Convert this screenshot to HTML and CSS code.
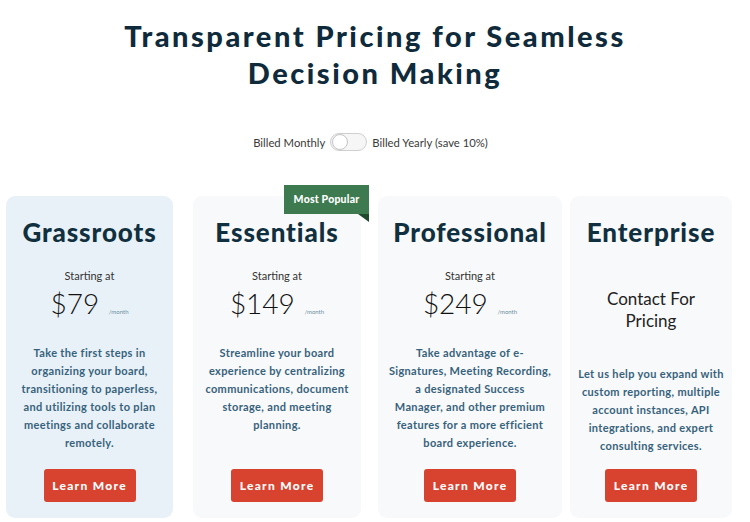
FILE: index.html
```html
<!DOCTYPE html>
<html lang="en">
<head>
<meta charset="utf-8">
<title>Pricing</title>
<link rel="stylesheet" href="styles.css">
</head>
<body>
<main class="page">
  <h1 class="title">Transparent Pricing for Seamless<br>Decision Making</h1>

  <div class="billing">
    <span class="billing-label">Billed Monthly</span>
    <span class="switch"><span class="knob"></span></span>
    <span class="billing-label">Billed Yearly (save 10%)</span>
  </div>

  <section class="plans">
    <article class="card card-grassroots">
      <h2 class="plan-name">Grassroots</h2>
      <p class="starting">Starting at</p>
      <p class="price">$79 <span class="per">/month</span></p>
      <p class="desc">Take the first steps in<br>organizing your board,<br>transitioning to paperless,<br>and utilizing tools to plan<br>meetings and collaborate<br>remotely.</p>
      <a class="btn" href="#">Learn More</a>
    </article>

    <article class="card card-essentials">
      <div class="badge">Most Popular</div>
      <h2 class="plan-name">Essentials</h2>
      <p class="starting">Starting at</p>
      <p class="price">$149 <span class="per">/month</span></p>
      <p class="desc">Streamline your board<br>experience by centralizing<br>communications, document<br>storage, and meeting<br>planning.</p>
      <a class="btn" href="#">Learn More</a>
    </article>

    <article class="card card-professional">
      <h2 class="plan-name">Professional</h2>
      <p class="starting">Starting at</p>
      <p class="price">$249 <span class="per">/month</span></p>
      <p class="desc">Take advantage of e-<br>Signatures, Meeting Recording,<br>a designated Success<br>Manager, and other premium<br>features for a more efficient<br>board experience.</p>
      <a class="btn" href="#">Learn More</a>
    </article>

    <article class="card card-enterprise">
      <h2 class="plan-name">Enterprise</h2>
      <p class="contact">Contact For<br>Pricing</p>
      <p class="desc">Let us help you expand with<br>custom reporting, multiple<br>account instances, API<br>integrations, and expert<br>consulting services.</p>
      <a class="btn" href="#">Learn More</a>
    </article>
  </section>
</main>
</body>
</html>
```

FILE: styles.css
```css
* { box-sizing: border-box; }

html, body {
  margin: 0;
  padding: 0;
  background: #ffffff;
}

body {
  font-family: Lato, "Open Sans", Arial, sans-serif;
  color: #222;
}

.page {
  width: 750px;
  height: 522px;
  overflow: hidden;
  padding-top: 17px;
}

.title {
  margin: 0;
  text-align: center;
  font-size: 29px;
  line-height: 37px;
  font-weight: 900;
  letter-spacing: 2.5px;
  color: #0f2b3b;
}

.billing {
  margin-top: 42px;
  display: flex;
  justify-content: center;
  align-items: center;
  gap: 5px;
  height: 18px;
  padding-right: 9px;
}

.billing-label {
  font-size: 11.3px;
  font-weight: 400;
  color: #3a3a3a;
}

.switch {
  width: 37px;
  height: 18px;
  border: 1px solid #cfcfcf;
  border-radius: 9px;
  background: #f6f6f6;
  display: flex;
  align-items: center;
  padding-left: 1px;
}

.knob {
  width: 16px;
  height: 16px;
  border-radius: 50%;
  background: #ffffff;
  border: 1px solid #c4c4c4;
}

.plans {
  margin-top: 45px;
  display: flex;
  align-items: stretch;
  padding-left: 6px;
}

.card {
  position: relative;
  display: flex;
  flex-direction: column;
  align-items: center;
  text-align: center;
  background: #f8f9fa;
  border-radius: 9px;
  padding: 21px 6px 16px;
  height: 322px;
}

.card-grassroots { width: 167px; background: #e9f1f8; }
.card-essentials { width: 168px; margin-left: 20px; }
.card-professional { width: 184px; margin-left: 17px; }
.card-enterprise { width: 162px; margin-left: 8px; }

.badge {
  position: absolute;
  top: -11px;
  right: -8px;
  width: 85px;
  height: 29px;
  background: #3e7a4f;
  color: #ffffff;
  font-size: 10.5px;
  font-weight: 900;
  line-height: 29px;
  text-align: center;
  letter-spacing: 0.2px;
}

.badge::after {
  content: "";
  position: absolute;
  right: 0;
  top: 29px;
  width: 11px;
  height: 8px;
  background: #1f4a2c;
  clip-path: polygon(0 0, 100% 0, 100% 100%);
}

.plan-name {
  margin: 0;
  font-size: 26px;
  line-height: 30px;
  font-weight: 900;
  letter-spacing: 0.9px;
  color: #11303f;
  white-space: nowrap;
}

.starting {
  margin: 21px 0 0;
  font-size: 11px;
  line-height: 16px;
  color: #333;
}

.price {
  margin: 3px 0 0;
  font-size: 28px;
  line-height: 32px;
  font-weight: 300;
  color: #111;
}

.per {
  font-size: 6px;
  font-weight: 400;
  color: #6b8ea3;
  margin-left: 2px;
}

.contact {
  margin: 41px 0 0;
  font-size: 17px;
  line-height: 22px;
  font-weight: 400;
  color: #222;
}

.desc {
  margin: 16px 0 0;
  font-size: 11px;
  line-height: 18px;
  font-weight: 700;
  color: #37627c;
  letter-spacing: 0.35px;
}

.card-enterprise .desc { margin-top: 33px; }

.btn {
  margin-top: auto;
  display: flex;
  align-items: center;
  justify-content: center;
  width: 92px;
  height: 33px;
  border-radius: 3px;
  background: #d8432f;
  color: #ffffff;
  text-decoration: none;
  font-size: 12px;
  font-weight: 900;
  letter-spacing: 1.3px;
}
```
